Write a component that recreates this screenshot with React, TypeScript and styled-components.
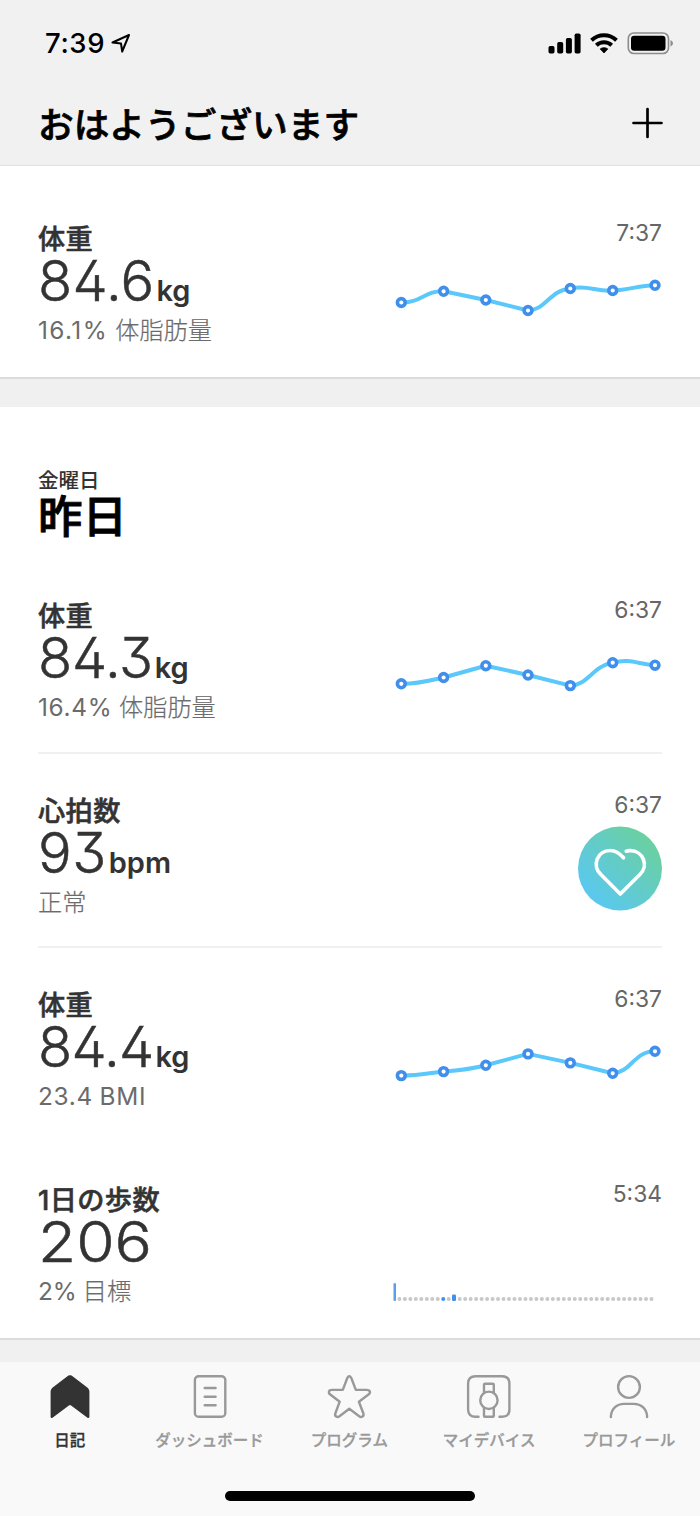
import React from "react";
import styled, { createGlobalStyle } from "styled-components";

const GlobalStyle = createGlobalStyle`
  * { box-sizing: border-box; }
  body { margin: 0; background: #f1f1f1; }
`;

const Screen = styled.div`
  width: 700px;
  height: 1516px;
  display: flex;
  flex-direction: column;
  overflow: hidden;
  background: #f0f0f0;
  color: #333;
  font-family: Inter, "Noto Sans CJK JP", sans-serif;
`;

const Header = styled.header`
  height: 166px;
  background: #f1f1f1;
  border-bottom: 1px solid #e0e0e0;
`;

const StatusBar = styled.div`
  height: 86px;
  padding: 0 26px 0 45px;
  display: flex;
  align-items: center;
  justify-content: space-between;
`;

const Clock = styled.div`
  display: flex;
  align-items: center;
  gap: 6px;
  color: #000;
  font-size: 27.5px;
  font-weight: 550;
  line-height: 34px;
  font-optical-sizing: none;
  letter-spacing: 0.6px;
`;

const TitleBar = styled.div`
  height: 75px;
  padding: 0 36px 0 38px;
  display: flex;
  align-items: center;
  justify-content: space-between;
`;

const Greeting = styled.h1`
  margin: 2px 0 0;
  color: #000;
  font-size: 35.7px;
  line-height: 50px;
  font-weight: 500;
  -webkit-text-stroke: 0.7px #000;
`;

const AddButton = styled.button`
  display: flex;
  margin-bottom: 1px;
  padding: 0;
  border: 0;
  background: none;
`;

const Section = styled.section<{ $top: number }>`
  padding: ${(p) => p.$top}px 38px 0;
  background: #fff;
  border-bottom: 2px solid #dcdcdc;
`;

const Gap = styled.div`
  height: 28px;
`;

const DayHeading = styled.div`
  height: 95px;
  padding-top: 5px;
  display: flex;
  flex-direction: column;
`;

const Weekday = styled.div`
  font-size: 20.5px;
  line-height: 24px;
  font-weight: 500;
`;

const Day = styled.h2`
  margin: 1px 0 0;
  color: #000;
  font-size: 44.5px;
  line-height: 46px;
  font-weight: 500;
  -webkit-text-stroke: 0.9px #000;
`;

const Row = styled.article<{ $divider?: boolean }>`
  height: 194.67px;
  display: flex;
  justify-content: space-between;
  border-bottom: 2px solid ${(p) => (p.$divider ? "#f0f0f0" : "transparent")};
`;

const Summary = styled.div`
  padding-top: 42px;
  display: flex;
  flex-direction: column;
`;

const Name = styled.div`
  font-size: 27.2px;
  line-height: 32px;
  font-weight: 500;
  letter-spacing: 0.4px;
  -webkit-text-stroke: 0.55px #333;
`;

const Reading = styled.div`
  height: 58px;
  margin-top: -4px;
  display: flex;
  align-items: baseline;
  line-height: 58px;
`;

const Digits = styled.span<{ $tracking: number; $stretch: number }>`
  font-size: 56px;
  font-weight: 300;
  font-optical-sizing: none;
  font-feature-settings: "cv02" 1, "cv09" 1;
  letter-spacing: ${(p) => p.$tracking}px;
  transform: scaleX(${(p) => p.$stretch});
  transform-origin: left;
  -webkit-text-stroke: 0.5px #333;
`;

const Unit = styled.span`
  margin-left: 2px;
  font-size: 29px;
  font-weight: 560;
`;

const Detail = styled.div<{ $tracking: number }>`
  margin-top: 5px;
  color: #6b6b6b;
  font-size: 24.4px;
  line-height: 30px;
  font-weight: 400;
  font-optical-sizing: none;
  letter-spacing: ${(p) => p.$tracking}px;
  word-spacing: -1px;
`;

const DetailLabel = styled.span`
  font-size: 24.2px;
  font-weight: 300;
  letter-spacing: 0;
  -webkit-text-stroke: 0.2px #6b6b6b;
`;

const Side = styled.div`
  padding-top: 36px;
  display: flex;
  flex-direction: column;
  align-items: flex-end;
`;

const Time = styled.time`
  color: #666;
  font-size: 22.8px;
  line-height: 30px;
`;

const ChartSlot = styled.div<{ $offset: number }>`
  margin-top: ${(p) => p.$offset}px;
  display: flex;
`;

const TabBar = styled.nav`
  height: 154px;
  margin-top: auto;
  padding-top: 12px;
  display: flex;
  flex-direction: column;
  align-items: center;
  background: #f9f9f9;
`;

const Tabs = styled.div`
  width: 100%;
  display: grid;
  grid-template-columns: repeat(5, 139.75px);
`;

const Tab = styled.div<{ $active?: boolean }>`
  display: flex;
  flex-direction: column;
  align-items: center;
  gap: 9px;
  color: ${(p) => (p.$active ? "#333" : "#999")};
  font-size: 15.5px;
  line-height: 20px;
  font-weight: 500;
  white-space: nowrap;
  -webkit-text-stroke: 0.3px currentColor;
`;

const HomeIndicator = styled.div`
  width: 250px;
  height: 10px;
  margin-top: 40px;
  border-radius: 5px;
  background: #000;
`;

const XS = [11.3, 53.6, 95.8, 138, 180.3, 222.7, 265];

function Trend({ ys, path }: { ys: number[]; path: string }) {
  return (
    <ChartSlot $offset={24}>
      <svg width="272" height="50" viewBox="0 0 272 50" fill="none">
        <path d={path} stroke="#5ac8fa" strokeWidth="4" strokeLinejoin="round" />
        {ys.map((y, i) => (
          <circle key={i} cx={XS[i]} cy={y} r="3.9" fill="#fff" stroke="#408fec" strokeWidth="3.6" />
        ))}
      </svg>
    </ChartSlot>
  );
}

function Steps() {
  return (
    <ChartSlot $offset={74}>
      <svg width="272" height="22" viewBox="0 0 272 22">
        <rect x="3.5" y="0.300" width="2.5" height="17.5" fill="#5c9de8" />
        {Array.from({ length: 47 }, (_, i) =>
          i === 10 ? (
            <rect key={i} x="62" y="11.6" width="4" height="6.4" rx="1.2" fill="#408fec" />
          ) : (
            <circle key={i} cx={9.4 + i * 5.48} cy="15.9" r="2" fill={i === 8 ? "#408fec" : "#c8c8c8"} />
          )
        )}
      </svg>
    </ChartSlot>
  );
}

function HeartBadge() {
  return (
    <ChartSlot $offset={6.5}>
      <svg width="84" height="85" viewBox="0 0 84 85" fill="none">
        <defs>
          <linearGradient id="badge" x1="12" y1="72" x2="72" y2="12" gradientUnits="userSpaceOnUse">
            <stop stopColor="#5ac8f0" />
            <stop offset="1" stopColor="#6bd0a0" />
          </linearGradient>
        </defs>
        <circle cx="42" cy="42.5" r="42" fill="url(#badge)" />
        <path
          d="M45.500 31.800C41.800 27.500 37.500 24.500 32.300 24.500A13.700 13.700 0 0 0 22.900 48.500L42.300 68L61.900 48.500A13.700 13.700 0 0 0 52.300 24.700Q50.200 24.600 48.300 25.200"
          stroke="#fff" strokeWidth="3.7" strokeLinecap="round" strokeLinejoin="round"
        />
      </svg>
    </ChartSlot>
  );
}

interface MetricProps {
  name: string;
  value: string;
  tracking: number;
  stretch?: number;
  unit?: string;
  figure?: string;
  figureTracking?: number;
  label?: string;
  time: string;
  divider?: boolean;
  children: React.ReactNode;
}

function Metric({ name, value, tracking, stretch = 1, unit, figure, figureTracking = 0.7, label, time, divider, children }: MetricProps) {
  return (
    <Row $divider={divider}>
      <Summary>
        <Name>{name}</Name>
        <Reading>
          <Digits $tracking={tracking} $stretch={stretch}>{value}</Digits>
          {unit && <Unit>{unit}</Unit>}
        </Reading>
        <Detail $tracking={figureTracking}>
          {figure} {label && <DetailLabel>{label}</DetailLabel>}
        </Detail>
      </Summary>
      <Side>
        <Time>{time}</Time>
        {children}
      </Side>
    </Row>
  );
}

const TabIcon = ({ children }: { children: React.ReactNode }) => (
  <svg width="46" height="48" viewBox="0 0 46 48" fill="none" stroke="currentColor" strokeWidth="2.4" strokeLinecap="round" strokeLinejoin="round">
    {children}
  </svg>
);

export default function App() {
  return (
    <Screen>
      <GlobalStyle />
      <Header>
        <StatusBar>
          <Clock>
            7:39
            <svg width="20" height="21" viewBox="0 0 20 21" fill="none" stroke="#000" strokeWidth="2" strokeLinejoin="round">
              <path d="M18 2L1.500 9.500L10 10.500L11.200 18.500Z" />
            </svg>
          </Clock>
          <svg width="126" height="24" viewBox="0 0 126 24">
            <g fill="#000">
              <rect x="0.500" y="15" width="6" height="7.500" rx="1.700" />
              <rect x="9.200" y="11" width="6" height="11.500" rx="1.700" />
              <rect x="17.900" y="7" width="6" height="15.500" rx="1.700" />
              <rect x="26.600" y="2.500" width="6" height="20" rx="1.700" />
            </g>
            <g fill="none" stroke="#000" strokeWidth="4">
              <path d="M43.500 9.200C50.500 2.500 61.500 2.500 68.500 9.200" />
              <path d="M48.300 14.300C52.700 10.300 59.300 10.300 63.700 14.300" />
            </g>
            <path d="M52.200 17.900C54.300 16.300 57.700 16.300 59.800 17.900L56 22Z" fill="#000" stroke="#000" strokeWidth="0.800" strokeLinejoin="round" />
            <rect x="80.300" y="2" width="40.200" height="20.500" rx="5.500" fill="none" stroke="#8c8c8c" strokeWidth="1.600" />
            <rect x="83" y="4.800" width="34.500" height="15" rx="3.200" fill="#000" />
            <path d="M122.500 9Q125 10.500 125 12.300T122.500 15.700Z" fill="#8c8c8c" />
          </svg>
        </StatusBar>
        <TitleBar>
          <Greeting>おはようございます</Greeting>
          <AddButton aria-label="追加">
            <svg width="33" height="32" viewBox="0 0 33 32" stroke="#000" strokeWidth="2.700" strokeLinecap="round">
              <path d="M16.500 2V30M2.500 16H30.500" />
            </svg>
          </AddButton>
        </TitleBar>
      </Header>

      <Section $top={16.3}>
        <Metric name="体重" value="84.6" tracking={0.2} unit="kg" figure="16.1%" figureTracking={1.4} label="体脂肪量" time="7:37">
          <Trend
            ys={[30.5, 19.3, 28, 38.5, 16.5, 18.5, 13.3]}
            path="M11.3 30.5C30 31.500 36 18 53.600 19.300L95.800 28L138 38.500C155 38.500 160 18 180.300 16.500C198 12.500 206 20 222.700 18.500C240 18 248 13.300 265 13.300"
          />
        </Metric>
      </Section>
      <Gap />
      <Section $top={57}>
        <DayHeading>
          <Weekday>金曜日</Weekday>
          <Day>昨日</Day>
        </DayHeading>
        <Metric name="体重" value="84.3" tracking={-0.3} unit="kg" figure="16.4%" label="体脂肪量" time="6:37" divider>
          <Trend
            ys={[34.8, 28.5, 16.7, 26, 36.6, 13.7, 16.2]}
            path="M11.300 34.800C27 35.200 39 31.700 53.600 28.500L95.800 16.700L138 26L180.300 36.600C198 36.200 203 16.700 222.700 13.700C240 9.200 248 15.200 265 16.200"
          />
        </Metric>
        <Metric name="心拍数" value="93" tracking={0.5} unit="bpm" label="正常" time="6:37" divider>
          <HeartBadge />
        </Metric>
        <Metric name="体重" value="84.4" tracking={-0.8} unit="kg" figure="23.4 BMI" time="6:37">
          <Trend
            ys={[37.6, 33.6, 27.3, 15.9, 24.9, 35.3, 13.3]}
            path="M11.300 37.600C27 38 39 35 53.600 33.600C70 32.500 82 31 95.800 27.300L138 15.900L180.300 24.900L222.700 35.300C241 34.500 244 13.300 265 13.300"
          />
        </Metric>
        <Metric name="1日の歩数" value="206" tracking={0} stretch={1.11} figure="2%" figureTracking={0} label="目標" time="5:34">
          <Steps />
        </Metric>
      </Section>

      <TabBar>
        <Tabs>
          <Tab $active>
            <TabIcon>
              <path d="M5.800 15L20.500 3.600Q23 1.500 25.500 3.600L40.200 15Q41.200 16 41.200 17.500V42.800L24.800 30.500Q23 29.200 21.200 30.500L4.800 42.800V17.500Q4.800 16 5.800 15Z" fill="currentColor" />
            </TabIcon>
            日記
          </Tab>
          <Tab>
            <TabIcon>
              <rect x="7.900" y="2.200" width="30.400" height="40.600" rx="3.800" />
              <path d="M17.700 14H28.600M17.700 22.700H28.600M17.700 31.300H28.600" />
            </TabIcon>
            ダッシュボード
          </Tab>
          <Tab>
            <TabIcon>
              <path d="M21.300 4Q23.300 0.500 25.300 4L29.800 15.900H40.500C44.200 15.900 45 18.700 42.500 20.500L32.900 27.700L37.400 39.500C38.200 42.500 35.500 43.800 33.200 42.200L23.300 34.800L13.500 42.200C11.200 43.800 8.500 42.500 9.300 39.500L13.700 27.700L4.300 20.500C1.800 18.700 2.600 15.900 6 15.900H16.800Z" />
            </TabIcon>
            プログラム
          </Tab>
          <Tab>
            <TabIcon>
              <path d="M12.500 42.800H9.500Q2.100 42.800 2.100 35.400V9.600Q2.100 2.200 9.500 2.200H36Q43.400 2.200 43.400 9.600V35.400Q43.400 42.800 36 42.800H33.500" />
              <circle cx="22.900" cy="26.300" r="8.700" />
              <path d="M18 18.500V10.700Q18 9.700 19 9.700H26.800Q27.800 9.700 27.800 10.700V18.500M18 34.200V41.800Q18 42.800 19 42.800H26.800Q27.800 42.800 27.800 41.800V34.200" />
            </TabIcon>
            マイデバイス
          </Tab>
          <Tab>
            <TabIcon>
              <circle cx="23" cy="13" r="10.900" />
              <path d="M4.900 43V42C5.500 34.500 11 29.900 18 29.900H28C35 29.900 40.500 34.500 41.100 42V43" />
            </TabIcon>
            プロフィール
          </Tab>
        </Tabs>
        <HomeIndicator />
      </TabBar>
    </Screen>
  );
}
